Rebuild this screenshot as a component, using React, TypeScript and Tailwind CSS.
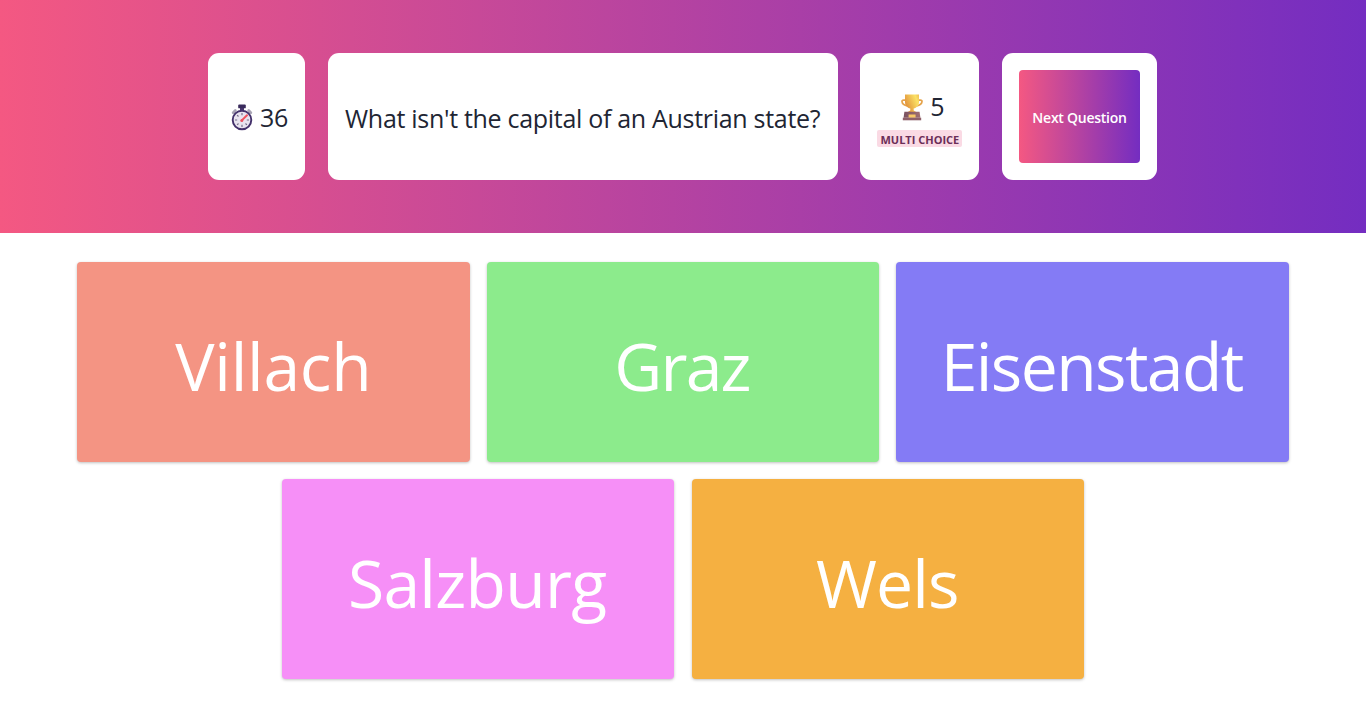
import type { ReactNode } from 'react';

function Stopwatch() {
  return (
    <svg className="h-[27px] w-[22px] shrink-0" viewBox="0 0 22 27">
      <path d="M2.2 8.7 4.3 6.6M19.8 8.7 17.7 6.6" stroke="#a9a5b5" strokeWidth="2.8" strokeLinecap="round" />
      <rect x="9" y="3" width="4" height="4" fill="#4b3a70" />
      <rect x="7.2" y="0.6" width="7.6" height="3.7" rx="0.9" fill="#392a5c" />
      <circle cx="11" cy="16" r="9.3" fill="#e8e3ef" stroke="#43316b" strokeWidth="1.9" />
      <path
        d="M11 9v2.2M11 20.8V23M4 16h2.2M15.8 16H18M6.1 11.1l1.4 1.4M14.5 19.5l1.4 1.4M6.1 20.9l1.4-1.4"
        stroke="#77718a"
        strokeWidth="1.2"
      />
      <path d="M10.8 16.4 16 11.3" stroke="#f0525c" strokeWidth="2" strokeLinecap="round" />
      <circle cx="10.8" cy="16.4" r="1.5" fill="#ee5361" />
    </svg>
  );
}

function Trophy() {
  return (
    <svg className="h-[27px] w-[22px] shrink-0" viewBox="0 0 22 27">
      <defs>
        <linearGradient id="cup" x1="0" x2="1" y1="0.5" y2="0">
          <stop offset="0" stopColor="#e2943c" />
          <stop offset="0.75" stopColor="#fbe266" />
          <stop offset="1" stopColor="#efbc55" />
        </linearGradient>
        <linearGradient id="base" x1="0" x2="1" y1="0" y2="0">
          <stop offset="0" stopColor="#7a5260" />
          <stop offset="1" stopColor="#a16f71" />
        </linearGradient>
      </defs>
      <path d="M5 6.2H2.6C1.2 6.2.9 6.8 1 7.6c.3 2.2 2.2 3.8 5.4 4.2M17 6.2h2.4c1.4 0 1.7.6 1.6 1.4-.3 2.2-2.2 3.8-5.4 4.2" fill="none" stroke="#e5a34b" strokeWidth="1.7" />
      <path d="M4 .5h14v7.6c0 3.6-2.4 5.7-5.3 6.5v2l2.5 1.3H6.8l2.5-1.3v-2C6.4 13.8 4 11.7 4 8.1Z" fill="url(#cup)" />
      <path d="M3.4 17.7h15.2l.8 6H2.6Z" fill="url(#base)" />
      <path d="M1.8 23.7h18.4v2.6H1.8Z" fill="#8e6069" />
      <rect x="7.6" y="20.4" width="7" height="3.2" rx="0.3" fill="#f7c767" />
    </svg>
  );
}

function Panel({ className, children }: { className: string; children: ReactNode }) {
  return <div className={`flex h-[127px] shrink-0 items-center justify-center rounded-[11px] bg-white ${className}`}>{children}</div>;
}

const answers = [
  { label: 'Villach', color: 'bg-[#f49483]', text: 'tracking-[-0.3px]' },
  { label: 'Graz', color: 'bg-[#8ceb8c]', text: 'tracking-[-1.8px] mr-[2px]' },
  { label: 'Eisenstadt', color: 'bg-[#847bf5]', text: 'tracking-[-1.6px] mr-[2px]' },
  { label: 'Salzburg', color: 'bg-[#f68ff7]', text: 'tracking-[-0.7px] mr-[2px]' },
  { label: 'Wels', color: 'bg-[#f5b041]', text: 'tracking-[-0.9px] mr-px' },
];

export default function App() {
  return (
    <div className="h-[708px] w-[1366px] overflow-hidden bg-white font-['Open_Sans','Noto_Sans',sans-serif] text-[#212533]">
      <header className="flex h-[233.3px] items-center justify-center gap-[22.7px] bg-linear-to-r/srgb from-[#f45882] to-[#742dc1] pr-px">
        <Panel className="w-[97px] gap-[7px] pt-[2px] pl-[6px]">
          <Stopwatch />
          <span className="text-[25px] leading-none tracking-[-0.4px]">36</span>
        </Panel>
        <Panel className="w-[510px] pt-[3px]">
          <h1 className="whitespace-nowrap text-[25px] leading-none tracking-[-0.3px]">What isn't the capital of an Austrian state?</h1>
        </Panel>
        <Panel className="w-[119px] flex-col gap-[9px] pt-[8px]">
          <div className="flex items-center gap-[7px] pl-[6px]">
            <Trophy />
            <span className="-mt-[2px] text-[25px] leading-none">5</span>
          </div>
          <span className="flex h-[17px] w-[85px] items-center justify-center whitespace-nowrap rounded-[2px] bg-[#fadae4] pt-px text-[11px] font-bold leading-none text-[#6b2e58]">
            MULTI CHOICE
          </span>
        </Panel>
        <Panel className="w-[155px]">
          <button className="h-[93px] w-[121px] whitespace-nowrap rounded-[4px] bg-linear-to-r/srgb from-[#f45882] to-[#742dc1] pt-[2px] text-[14px] font-semibold leading-none tracking-[-0.25px] text-white">
            Next Question
          </button>
        </Panel>
      </header>
      <main className="flex flex-wrap justify-center gap-[17.1px] px-[68px] pt-[28.5px]">
        {answers.map((a) => (
          <button
            key={a.label}
            className={`flex h-[200.3px] w-[392.6px] items-center justify-center rounded-[4px] pt-[6px] text-[66px] leading-none text-white shadow-[0_1px_3px_rgba(0,0,0,0.25)] ${a.color}`}
          >
            <span className={a.text}>{a.label}</span>
          </button>
        ))}
      </main>
    </div>
  );
}
